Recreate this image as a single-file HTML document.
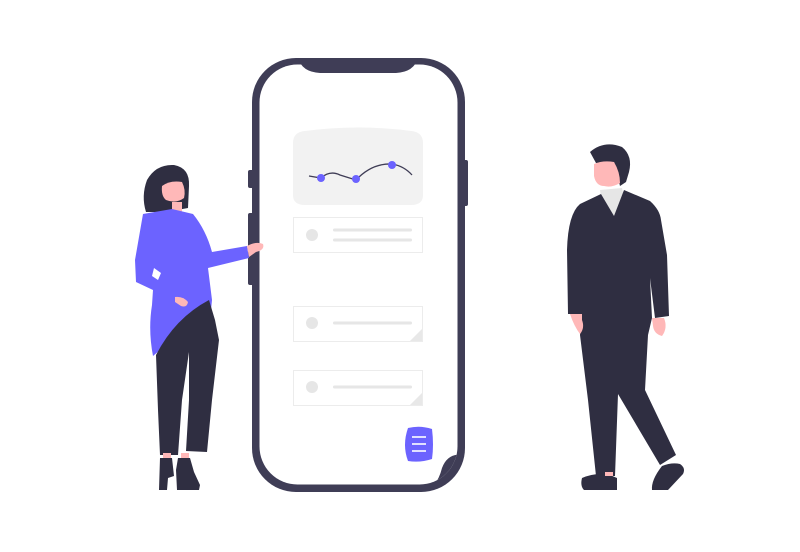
<!DOCTYPE html>
<html><head><meta charset="utf-8"><style>html,body{margin:0;padding:0;background:#fff}svg{display:block}</style></head>
<body>
<svg width="800" height="552" viewBox="0 0 800 552" xmlns="http://www.w3.org/2000/svg">
<defs><clipPath id="scr"><rect x="259.5" y="64.5" width="198" height="420" rx="38"/></clipPath></defs>
<!-- phone side buttons -->
<rect x="248" y="170" width="6" height="18" rx="2" fill="#3f3d56"/>
<rect x="248" y="213" width="6" height="72" rx="2" fill="#3f3d56"/>
<rect x="463" y="160" width="5" height="46" rx="2" fill="#3f3d56"/>
<!-- phone -->
<rect x="252" y="58" width="213" height="434" rx="44" fill="#3f3d56"/>
<rect x="259.5" y="64.5" width="198" height="420" rx="38" fill="#fff"/>
<path d="M298 58 H418 Q414 72 396 73 H320 Q302 72 298 58Z" fill="#3f3d56"/>
<path clip-path="url(#scr)" d="M465 455 Q448 452 442 468 Q438 484 428 490 H465Z" fill="#3f3d56"/>
<!-- chart card -->
<path d="M293 143 Q293 132 305 131 Q358 124 411 131 Q423 132 423 143 V195 Q423 205 411 205 H305 Q293 205 293 195Z" fill="#f2f2f2"/>
<path d="M309 176 L321 178 Q330 170 340 175 L356 180 Q372 163 392 164 Q404 166 412 175" fill="none" stroke="#3f3d56" stroke-width="1.3"/>
<circle cx="321" cy="178" r="4" fill="#6c63ff"/>
<circle cx="356" cy="179" r="4" fill="#6c63ff"/>
<circle cx="392" cy="165" r="4" fill="#6c63ff"/>
<!-- list cards -->
<g fill="#fff" stroke="#ececec" stroke-width="1">
<rect x="293.5" y="217.5" width="129" height="35"/>
<rect x="293.5" y="306.5" width="129" height="35"/>
<rect x="293.5" y="370.5" width="129" height="35"/>
</g>
<path d="M410 341 L422 329 V341Z" fill="#e8e8e8"/>
<path d="M410 405 L422 393 V405Z" fill="#e8e8e8"/>
<g fill="#e6e6e6">
<circle cx="312" cy="235" r="6"/><rect x="333" y="228.5" width="79" height="3" rx="1.5"/><rect x="333" y="238.5" width="79" height="3" rx="1.5"/>
<circle cx="312" cy="323" r="6"/><rect x="333" y="321.5" width="79" height="3" rx="1.5"/>
<circle cx="312" cy="387" r="6"/><rect x="333" y="385.5" width="79" height="3" rx="1.5"/>
</g>
<!-- menu button -->
<path d="M408 428 Q420 425 432 429 Q434 445 432 459 Q420 463 408 461 Q402 445 408 428Z" fill="#6c63ff"/>
<g stroke="#fff" stroke-width="1.6"><line x1="412" y1="437" x2="426" y2="437"/><line x1="412" y1="444" x2="426" y2="444"/><line x1="412" y1="451" x2="426" y2="451"/></g>

<!-- woman -->
<path d="M147 180 Q156 164 174 165 Q190 168 189 186 L188 208 L166 212 L146 212 Q141 196 147 180Z" fill="#2f2e41"/>
<path d="M162 186 Q170 180 182 182 Q186 190 184 198 Q176 204 166 200 Q161 196 162 186Z" fill="#ffb8b8"/>
<rect x="172" y="202" width="10" height="10" fill="#ffb8b8"/>
<path d="M143 214 L172 209 L193 214 Q206 230 212 252 L247 246 L249 258 L208 268 L212 300 L210 320 L160 350 L153 356 Q148 330 152 305 L153 290 L136 282 L135 260 Z" fill="#6c63ff"/>
<path d="M247 246 Q256 241 263 244 Q265 250 256 252 L249 257Z" fill="#ffb8b8"/>
<path d="M154 268 L161 273 L158 280 L152 276Z" fill="#fff"/>
<path d="M175 297 Q183 296 188 302 Q187 308 181 306 L175 302Z" fill="#ffb8b8"/>
<path d="M156 355 Q175 318 209 300 L215 320 L219 340 L212 400 L207 452 L186 451 L189 400 L189 352 L182 400 L178 455 L160 455 L158 410Z" fill="#2f2e41"/>
<path d="M160 458 H172 L174 476 L168 478 L167 490 H159Z" fill="#2f2e41"/>
<path d="M178 458 H190 L194 472 L200 485 L199 490 H177 L176 470Z" fill="#2f2e41"/>
<rect x="163" y="453" width="8" height="5" fill="#ffb8b8"/>
<rect x="181" y="453" width="8" height="5" fill="#ffb8b8"/>

<!-- man -->
<path d="M590 152 Q604 140 622 147 Q633 156 629 172 L626 182 L620 186 L614 162 L596 163Z" fill="#2f2e41"/>
<path d="M594 164 Q603 160 614 162 Q620 172 620 183 Q612 188 604 186 Q596 186 594 176Z" fill="#ffb8b8"/>
<path d="M600 190 L622 188 L626 206 L614 218 L602 204Z" fill="#e6e6e6"/>
<path d="M601 194 L614 216 L624 190 L650 201 Q660 210 661 220 L667 255 L669 316 L655 318 L650 278 L652 318 L648 335 L645 390 L676 455 L660 465 L618 394 L615 476 L596 476 L588 400 L580 335 L582 314 L568 314 L567 250 Q568 214 580 204Z" fill="#2f2e41"/>
<path d="M582 314 L570 314 Q574 326 580 334 Q585 328 582 320Z" fill="#ffb8b8"/>
<path d="M652 318 L664 318 Q668 328 662 336 Q654 334 653 326Z" fill="#ffb8b8"/>
<path d="M582 478 Q596 472 610 475 L617 478 L617 490 H584 Q580 486 582 478Z" fill="#2f2e41"/>
<path d="M662 466 Q672 462 680 464 Q686 468 683 474 L668 490 H652 Q651 480 662 466Z" fill="#2f2e41"/>
<rect x="605" y="472" width="8" height="4" fill="#ffb8b8"/>
</svg>
</body></html>
